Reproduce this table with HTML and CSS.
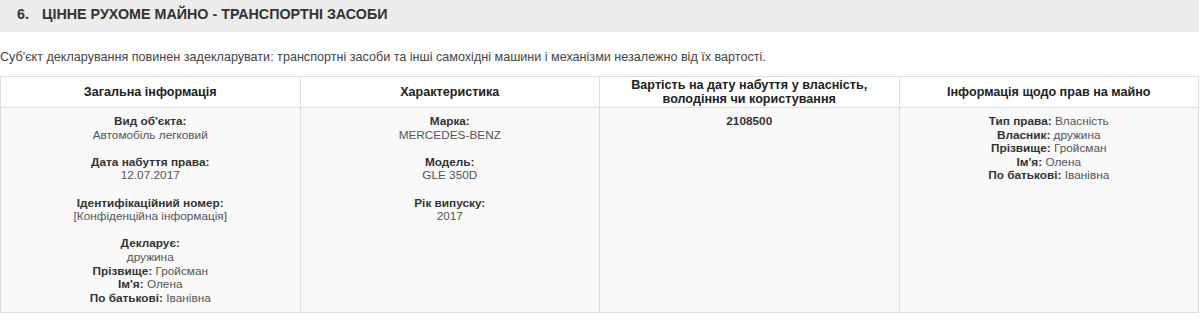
FILE: index.html
```html
<!DOCTYPE html>
<html lang="uk">
<head>
<meta charset="utf-8">
<title>Транспортні засоби</title>
<link rel="stylesheet" href="styles.css">
</head>
<body>
<div class="section-title"><span class="num">6.</span>ЦІННЕ РУХОМЕ МАЙНО - ТРАНСПОРТНІ ЗАСОБИ</div>
<div class="note">Суб'єкт декларування повинен задекларувати: транспортні засоби та інші самохідні машини і механізми незалежно від їх вартості.</div>
<table class="data">
  <thead>
    <tr>
      <th>Загальна інформація</th>
      <th>Характеристика</th>
      <th>Вартість на дату набуття у власність,<br>володіння чи користування</th>
      <th>Інформація щодо прав на майно</th>
    </tr>
  </thead>
  <tbody>
    <tr>
      <td>
        <b>Вид об'єкта:</b><br><span class="v">Автомобіль легковий</span><br><br>
        <b>Дата набуття права:</b><br><span class="v">12.07.2017</span><br><br>
        <b>Ідентифікаційний номер:</b><br><span class="v">[Конфіденційна інформація]</span><br><br>
        <b>Декларує:</b><br><span class="v">дружина</span><br>
        <b>Прізвище:</b> <span class="v">Гройсман</span><br>
        <b>Ім'я:</b> <span class="v">Олена</span><br>
        <b>По батькові:</b> <span class="v">Іванівна</span>
      </td>
      <td>
        <b>Марка:</b><br><span class="v">MERCEDES-BENZ</span><br><br>
        <b>Модель:</b><br><span class="v">GLE 350D</span><br><br>
        <b>Рік випуску:</b><br><span class="v">2017</span>
      </td>
      <td><b>2108500</b></td>
      <td>
        <b>Тип права:</b> <span class="v">Власність</span><br>
        <b>Власник:</b> <span class="v">дружина</span><br>
        <b>Прізвище:</b> <span class="v">Гройсман</span><br>
        <b>Ім'я:</b> <span class="v">Олена</span><br>
        <b>По батькові:</b> <span class="v">Іванівна</span>
      </td>
    </tr>
  </tbody>
</table>
</body>
</html>
```

FILE: styles.css
```css
html, body {
  margin: 0;
  padding: 0;
  background: #ffffff;
}
body {
  font-family: "Liberation Sans", Arial, sans-serif;
  font-size: 12.6px;
  color: #333;
  width: 1199px;
}
.section-title {
  background: #ececec;
  height: 32px;
  box-sizing: border-box;
  padding: 6px 0 0 17px;
  font-size: 14.3px;
  line-height: 16px;
  font-weight: bold;
  color: #333;
}
.section-title .num {
  display: inline-block;
  width: 25px;
}
.note {
  margin-top: 18px;
  line-height: 14px;
  color: #444;
}
.data {
  margin-top: 12px;
  width: 1199px;
  table-layout: fixed;
  border-collapse: collapse;
  border: 1px solid #dedede;
}
.data th {
  background: #fff;
  border: 1px solid #dedede;
  padding: 1px 5px;
  line-height: 14px;
  height: 28px;
  font-weight: bold;
  color: #222;
  text-align: center;
  vertical-align: middle;
}
.data td {
  background: #f9f9f9;
  border: 1px solid #dedede;
  padding: 7px 5px 7px;
  font-size: 11.8px;
  line-height: 13.6px;
  text-align: center;
  vertical-align: top;
}
.data b {
  color: #333;
}
.data .v {
  color: #555;
}
```
